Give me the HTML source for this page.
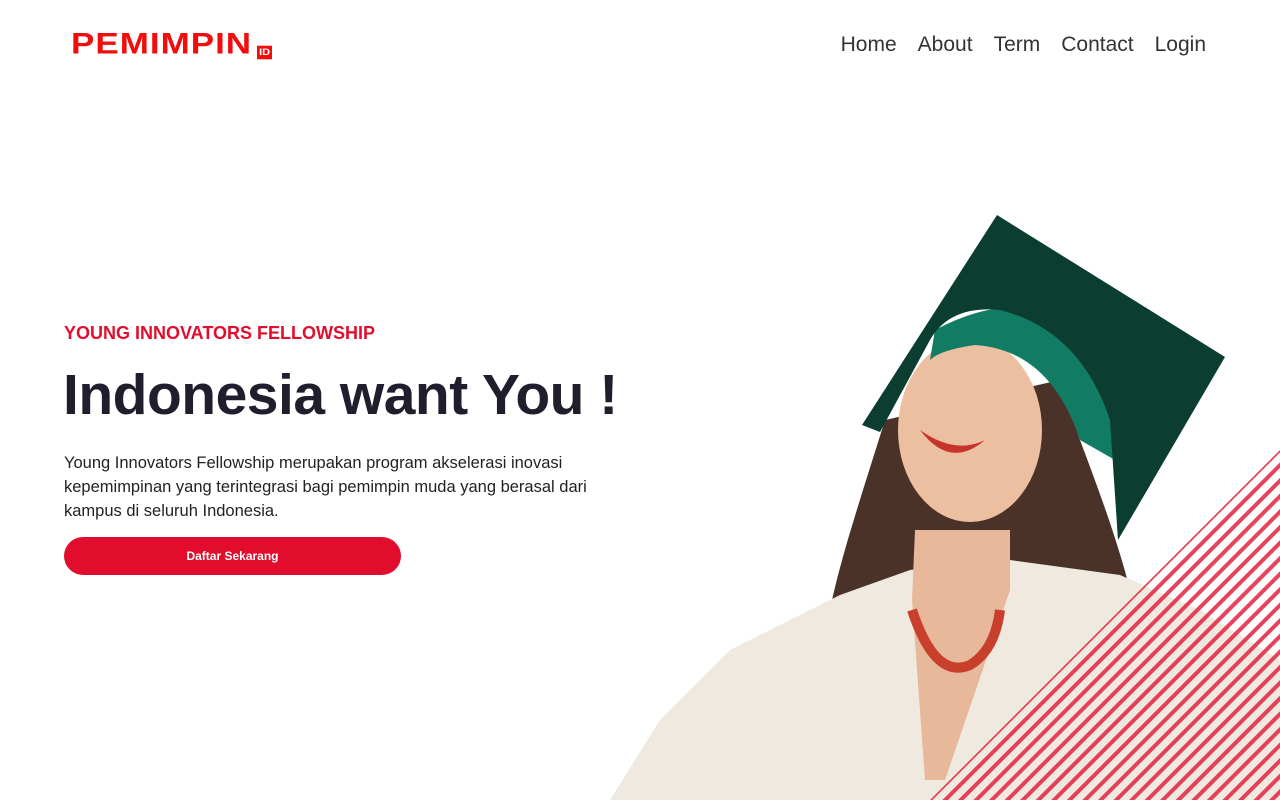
<!DOCTYPE html>
<html><head><meta charset="utf-8"><style>
*{margin:0;padding:0;box-sizing:border-box}
body{width:1280px;height:800px;overflow:hidden;background:#fff;font-family:"Liberation Sans",sans-serif;position:relative}
.logo{position:absolute;left:71px;top:27px;color:#f20d0d;font-weight:900;font-size:35px;letter-spacing:1px;transform:scaleY(0.85);transform-origin:left top;line-height:40px}
.logo span{display:inline-block;background:#f20d0d;color:#fff;font-size:11px;line-height:14px;padding:1px 2px;margin-left:5px;letter-spacing:0;vertical-align:-2px}
nav{position:absolute;top:33px;right:74px;font-size:21px;color:#333}
nav a{margin-left:21px}
.sub{position:absolute;left:64px;top:323px;color:#e20d2d;font-weight:bold;font-size:18px}
h1{position:absolute;left:63px;top:362px;font-size:57px;font-weight:bold;color:#1e1e2d;letter-spacing:-0.5px;white-space:nowrap}
p{position:absolute;left:64px;top:451px;width:560px;font-size:16.5px;line-height:24px;color:#222;letter-spacing:0}
.btn{position:absolute;left:64px;top:537px;width:337px;height:38px;border-radius:19px;background:#e20d2d;color:#fff;font-weight:bold;font-size:12px;text-align:center;line-height:38px}
svg{position:absolute;left:0;top:0}
</style></head><body>
<svg width="1280" height="800">
<defs>
<pattern id="st" width="11" height="11" patternUnits="userSpaceOnUse" patternTransform="rotate(45)">
<rect width="4" height="11" fill="#e2233f" opacity="0.85"/>
</pattern>
</defs>
<path d="M885 420 C860 500 840 560 830 610 L900 600 L1000 580 L1090 600 L1140 740 L1150 700 C1140 600 1110 520 1080 440 L1060 380 Z" fill="#4a3228"/>
<path d="M610 800 L660 720 L730 650 L840 595 L910 570 L1010 560 L1120 575 L1200 610 L1280 660 L1280 800 Z" fill="#efe9df"/>
<path d="M915 530 L1010 530 L1010 590 L945 780 L925 780 L912 600 Z" fill="#e8b89a"/>
<ellipse cx="970" cy="430" rx="72" ry="92" fill="#ecbfa0"/>
<path d="M920 430 Q950 470 985 440 Q955 455 920 430Z" fill="#c8342c"/>
<path d="M912 610 Q935 680 970 665 Q995 650 1000 610" stroke="#c8402c" stroke-width="10" fill="none"/>
<path d="M935 330 Q1010 290 1070 320 Q1110 370 1115 460 L1080 440 Q1050 350 975 345 Q940 350 930 360 Z" fill="#117b63"/>
<path d="M997 215 L1225 357 L1118 540 L1110 420 Q1080 330 1000 310 Q950 305 930 340 L880 432 L862 425 Z" fill="#0c3d31"/>
<path d="M930 800 L1280 450 L1280 800 Z" fill="url(#st)"/>
</svg>
<div class="logo">PEMIMPIN<span>ID</span></div>
<nav><a>Home</a><a>About</a><a>Term</a><a>Contact</a><a>Login</a></nav>
<div class="sub">YOUNG INNOVATORS FELLOWSHIP</div>
<h1>Indonesia want You !</h1>
<p>Young Innovators Fellowship merupakan program akselerasi inovasi kepemimpinan yang terintegrasi bagi pemimpin muda yang berasal dari kampus di seluruh Indonesia.</p>
<div class="btn">Daftar Sekarang</div>
</body></html>
